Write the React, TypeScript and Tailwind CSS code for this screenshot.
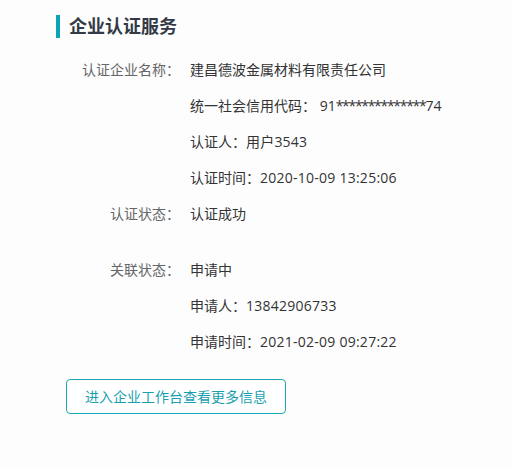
import React from "react";

const font = { fontFamily: '"Open Sans", "Noto Sans CJK SC", sans-serif' };

function Row({ label, children }: { label?: string; children: React.ReactNode }) {
  return (
    <>
      <div className="text-right text-[#666666] h-[36px] leading-[36px]">{label ?? ""}</div>
      <div className="pl-[10px] text-[#333333] h-[36px] leading-[36px] whitespace-nowrap">{children}</div>
    </>
  );
}

export default function App() {
  return (
    <div className="w-[513px] h-[467px] bg-[#fdfdfe] overflow-hidden" style={font}>
      <div className="pt-[15px] pl-[56px]">
        <div className="flex items-center">
          <div className="w-[4px] h-[23px] bg-[#0aa6b8]" />
          <div className="ml-[9px] text-[18px] font-bold leading-[23px] text-[#333a45]">企业认证服务</div>
        </div>
        <div className="mt-[14px] grid grid-cols-[124px_1fr] text-[14px]">
          <Row label="认证企业名称：">建昌德波金属材料有限责任公司</Row>
          <Row>
            统一社会信用代码：&nbsp;91<span className="tracking-[-1.3px]">**************</span>74
          </Row>
          <Row>认证人：<span className="tracking-[0.2px]">用户3543</span></Row>
          <Row>认证时间：<span className="tracking-[0.25px]">2020-10-09 13:25:06</span></Row>
          <Row label="认证状态：">认证成功</Row>
          <div className="h-[20px] col-span-2" />
          <Row label="关联状态：">申请中</Row>
          <Row>申请人：<span className="tracking-[0.25px]">13842906733</span></Row>
          <Row>申请时间：<span className="tracking-[0.25px]">2021-02-09 09:27:22</span></Row>
        </div>
        <button className="mt-[19px] ml-[10px] w-[220px] h-[35px] border border-[#1aa7b7] rounded-[4px] text-[14px] text-[#1a9fb0] bg-white flex items-center justify-center">
          进入企业工作台查看更多信息
        </button>
      </div>
    </div>
  );
}
